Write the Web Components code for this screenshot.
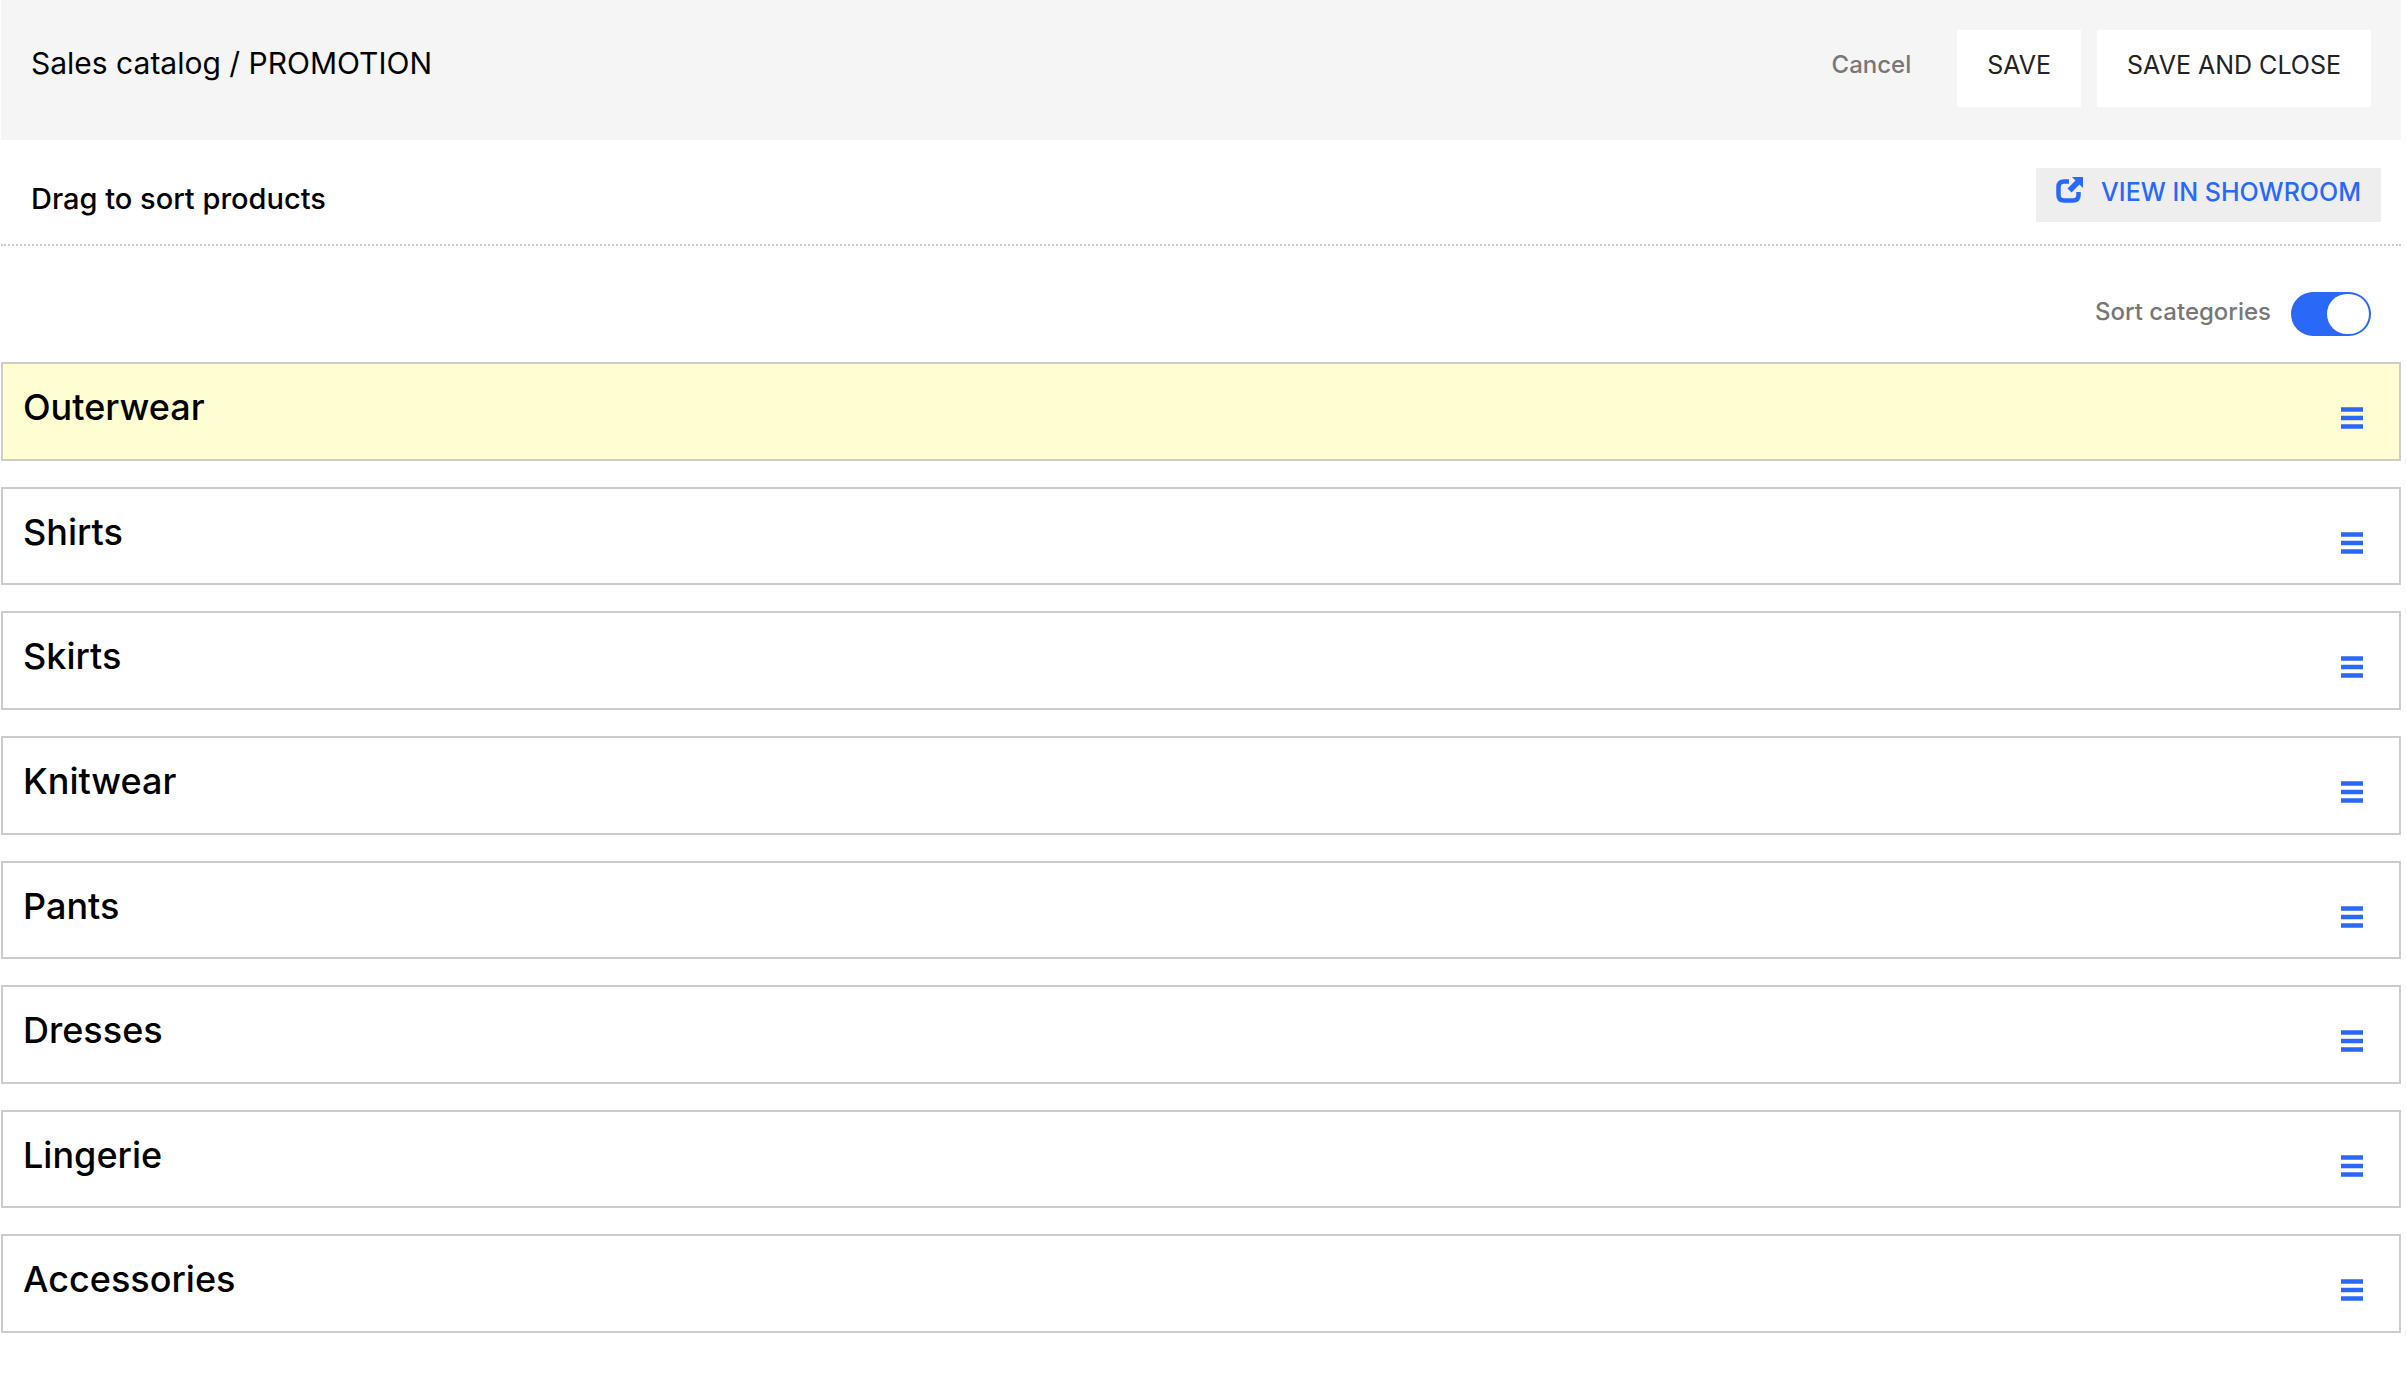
<!DOCTYPE html>
<html lang="en">
<head>
<meta charset="utf-8">
<title>Sales catalog / PROMOTION</title>
<style>
body { margin: 0; background: #fff; color: #000; font-family: Inter, "Liberation Sans", sans-serif; }
</style>
</head>
<body>
<catalog-page></catalog-page>
<script>
const define = (name, html, setup) => customElements.define(name, class extends HTMLElement {
  constructor() {
    super();
    this.attachShadow({ mode: 'open' }).innerHTML = html;
  }
  connectedCallback() { if (setup) setup(this); }
});

define('save-button', `
<style>
:host { display: block; }
button { font: 400 25px/30px Inter, sans-serif; color: #222; background: #fff; border: 0; margin: 0; padding: 20px 30px 27px; cursor: pointer; white-space: nowrap; }
</style>
<button type="button"><slot></slot></button>`);

define('page-header', `
<style>
:host { display: flex; justify-content: space-between; align-items: flex-start; background: #f5f5f5; padding: 30px 30px 33px; }
h1 { margin: 0; padding: 14px 0; font-size: 30px; line-height: 38px; font-weight: 400; }
.actions { display: flex; gap: 16px; }
.cancel { font: 500 24px/30px Inter, sans-serif; color: #777; background: none; border: 0; padding: 20px 30px 27px; cursor: pointer; }
</style>
<h1><slot></slot></h1>
<div class="actions">
  <button class="cancel" type="button">Cancel</button>
  <save-button>SAVE</save-button>
  <save-button>SAVE AND CLOSE</save-button>
</div>`);

define('sort-toolbar', `
<style>
:host { display: flex; justify-content: space-between; align-items: flex-start; padding: 28px 20px 22px 30px; border-bottom: 2px dotted #ccc; }
h2 { margin: 0; padding: 12px 0 4px; font-size: 29px; line-height: 38px; font-weight: 500; }
a { display: flex; align-items: flex-start; gap: 18px; padding: 9px 20px 15px; background: #eee; color: #2a68f8; text-decoration: none; font-size: 25px; line-height: 30px; font-weight: 500; white-space: nowrap; }
svg { display: block; }
</style>
<h2><slot></slot></h2>
<a href="#showroom">
  <svg width="27" height="27" viewBox="0 0 27 27" aria-hidden="true"><path d="M13 4.500H8Q2.500 4.500 2.500 10V18Q2.500 23.500 8 23.500H17Q22.500 23.500 22.500 18V15" fill="none" stroke="#2a68f8" stroke-width="4.500"/><path d="M16 0H27V11L23.500 7.500L15.500 15.500L11.500 11.500L19.500 3.500Z" fill="#2a68f8"/></svg>
  <span>VIEW IN SHOWROOM</span>
</a>`);

define('toggle-switch', `
<style>
:host { display: flex; justify-content: flex-end; padding: 46px 30px 26px; }
label { display: flex; align-items: flex-start; gap: 20px; color: #777; font-size: 24px; line-height: 40px; font-weight: 500; }
input { appearance: none; box-sizing: border-box; display: flex; justify-content: flex-end; width: 80px; height: 44px; margin: 0; padding: 2px; border-radius: 22px; background: #2a68f8; cursor: pointer; }
input::before { content: ""; width: 42px; height: 40px; border-radius: 21px; background: #fff; }
input:not(:checked) { justify-content: flex-start; background: #ccc; }
</style>
<label for="toggle"><slot></slot><input id="toggle" type="checkbox" role="switch" checked></label>`);

define('category-row', `
<style>
:host { display: flex; justify-content: space-between; align-items: flex-start; border: 2px solid #ccc; padding: 18px 36px 0 20px; background: #fff; }
:host([active]) { background: #fffed3; }
h3 { margin: 0; font-size: 36px; line-height: 50px; font-weight: 500; }
button { border: 0; background: none; margin: 25px 0 0; padding: 0; cursor: grab; }
svg { display: block; }
</style>
<h3><slot></slot></h3>
<button type="button" aria-label="Drag"><svg width="22" height="22" viewBox="0 0 22 22"><path d="M0 .2h22v4.600H0zM0 8.700h22v4.600H0zM0 17.200h22v4.600H0z" fill="#2a68f8"/></svg></button>`);

define('category-list', `
<style>
:host { display: grid; grid-auto-rows: 1fr; gap: 26px; min-height: 971px; }
</style>
<slot></slot>`);

define('catalog-page', `
<style>
:host { display: block; margin: 0 5px 0 1px; }
</style>
<page-header>Sales catalog / PROMOTION</page-header>
<main>
<sort-toolbar>Drag to sort products</sort-toolbar>
<toggle-switch>Sort categories</toggle-switch>
<category-list></category-list>
</main>`, (el) => {
  const list = el.shadowRoot.querySelector('category-list');
  ['Outerwear', 'Shirts', 'Skirts', 'Knitwear', 'Pants', 'Dresses', 'Lingerie', 'Accessories'].forEach((name, i) => {
    const row = document.createElement('category-row');
    row.textContent = name;
    if (i === 0) row.setAttribute('active', '');
    list.append(row);
  });
});
</script>
</body>
</html>
